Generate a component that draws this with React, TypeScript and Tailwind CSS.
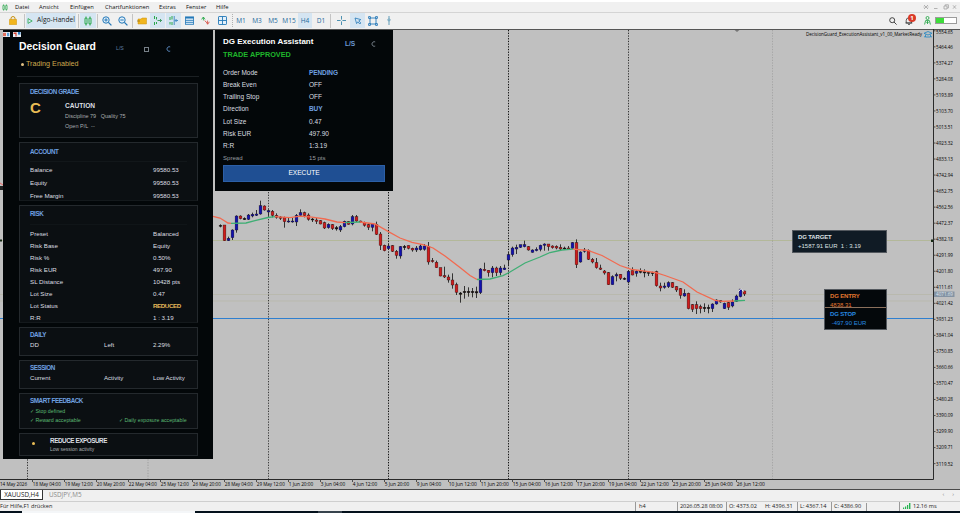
import type { ReactNode } from 'react';
import { clsx } from 'clsx';

// x, body top, body bottom, wick top, wick bottom, colour
type Candle = [number, number, number, number, number, 'r' | 'b' | 'k'];

// every group is stored at 3x with its own origin
const GROUPS: { ox: number; oy: number; data: Candle[] }[] = [
  {
    ox: 210,
    oy: 190,
    data: [
      [30, 106, 109, 103, 112, 'k'], [42, 105, 152, 105, 153, 'r'], [55, 145, 152, 140, 153, 'b'], [67, 120, 143, 118, 150, 'b'],
      [79, 78, 120, 76, 128, 'b'], [91, 78, 86, 76, 88, 'r'], [103, 85, 89, 82, 90, 'k'], [115, 75, 88, 72, 90, 'b'],
      [127, 73, 78, 68, 82, 'b'], [139, 72, 76, 60, 78, 'b'], [151, 47, 72, 32, 74, 'b'], [163, 48, 60, 46, 62, 'r'],
      [175, 62, 66, 58, 80, 'b'], [187, 64, 76, 60, 82, 'r'], [199, 76, 82, 70, 86, 'r'], [211, 81, 85, 78, 90, 'r'],
      [223, 82, 95, 80, 113, 'r'], [235, 93, 96, 84, 98, 'b'], [247, 93, 96, 84, 98, 'b'], [259, 76, 96, 72, 108, 'b'],
      [271, 68, 76, 58, 78, 'b'], [283, 68, 77, 65, 82, 'r'], [295, 75, 88, 70, 92, 'r'], [307, 87, 90, 84, 96, 'k'],
      [319, 90, 94, 84, 102, 'r'], [331, 92, 102, 90, 103, 'r'], [343, 98, 114, 95, 117, 'r'], [355, 103, 113, 100, 116, 'b'],
      [367, 104, 116, 102, 120, 'r'], [379, 113, 117, 108, 122, 'k'], [391, 110, 120, 105, 126, 'b'], [403, 94, 110, 92, 112, 'b'],
      [415, 95, 103, 93, 104, 'r'], [427, 80, 102, 75, 106, 'b'], [439, 80, 93, 75, 96, 'r'], [451, 93, 96, 92, 98, 'r'],
      [463, 98, 106, 95, 110, 'r'], [475, 104, 112, 100, 120, 'r'], [487, 102, 112, 100, 124, 'b'], [499, 103, 133, 95, 135, 'r'],
      [511, 132, 166, 126, 180, 'r'], [523, 166, 182, 164, 184, 'r'], [535, 168, 176, 162, 180, 'b'], [547, 167, 184, 165, 186, 'r'],
      [559, 184, 196, 180, 206, 'r'], [571, 170, 198, 168, 206, 'b'], [583, 169, 173, 165, 180, 'k'], [595, 167, 175, 166, 178, 'r'],
      [607, 175, 180, 173, 185, 'r'], [619, 174, 180, 168, 186, 'b'], [631, 174, 178, 164, 182, 'k'],
    ],
  },
  {
    ox: 420,
    oy: 220,
    data: [
      [1, 78, 88, 74, 90, 'b'], [13, 78, 88, 72, 92, 'b'], [25, 80, 126, 66, 134, 'r'], [37, 122, 125, 114, 128, 'r'],
      [49, 127, 143, 122, 144, 'r'], [61, 143, 168, 143, 169, 'r'], [73, 167, 171, 140, 174, 'r'], [85, 171, 180, 164, 188, 'r'],
      [97, 180, 195, 160, 206, 'r'], [109, 194, 217, 188, 225, 'r'], [121, 219, 223, 216, 248, 'k'], [133, 214, 218, 198, 236, 'k'],
      [145, 214, 218, 202, 230, 'k'], [157, 214, 218, 204, 232, 'k'], [169, 215, 219, 200, 234, 'k'], [181, 147, 218, 144, 222, 'b'],
      [193, 148, 152, 128, 154, 'r'], [205, 151, 158, 150, 170, 'r'], [217, 144, 158, 138, 172, 'b'], [229, 144, 158, 140, 168, 'r'],
      [241, 144, 158, 138, 166, 'b'], [253, 144, 149, 134, 150, 'b'], [265, 104, 120, 96, 138, 'b'], [277, 84, 104, 80, 110, 'b'],
      [289, 82, 87, 74, 102, 'b'], [301, 74, 82, 74, 84, 'b'], [313, 74, 80, 62, 82, 'b'], [325, 80, 90, 78, 92, 'r'],
      [337, 90, 97, 88, 98, 'b'], [349, 88, 92, 82, 94, 'b'], [361, 76, 88, 74, 94, 'b'], [373, 72, 76, 70, 92, 'b'],
      [385, 72, 80, 72, 92, 'r'], [397, 78, 83, 76, 86, 'r'], [409, 79, 84, 76, 88, 'r'], [421, 82, 87, 73, 90, 'r'],
      [433, 84, 87, 80, 90, 'k'], [445, 84, 87, 78, 90, 'r'], [457, 68, 85, 66, 86, 'b'], [469, 68, 134, 58, 144, 'r'],
      [481, 96, 126, 94, 128, 'b'], [493, 90, 94, 84, 98, 'b'], [505, 92, 118, 88, 120, 'r'], [517, 118, 126, 114, 130, 'r'],
      [529, 128, 143, 114, 146, 'r'], [541, 144, 148, 134, 150, 'r'], [553, 153, 159, 150, 164, 'r'], [565, 158, 194, 156, 195, 'r'],
      [577, 170, 194, 166, 194, 'b'], [589, 164, 168, 158, 184, 'b'], [601, 163, 175, 162, 180, 'r'], [613, 175, 178, 172, 180, 'k'],
      [625, 154, 186, 150, 190, 'b'], [637, 152, 165, 142, 166, 'r'], [649, 154, 160, 150, 170, 'b'],
    ],
  },
  {
    ox: 640,
    oy: 220,
    data: [
      [1, 153, 157, 145, 160, 'k'], [13, 155, 159, 148, 172, 'k'], [25, 157, 160, 154, 168, 'k'], [37, 158, 161, 155, 168, 'k'],
      [49, 155, 197, 152, 200, 'r'], [61, 198, 204, 188, 214, 'r'], [73, 198, 202, 188, 206, 'b'], [85, 188, 200, 184, 204, 'b'],
      [97, 188, 202, 186, 204, 'r'], [109, 200, 210, 198, 216, 'r'], [121, 206, 226, 204, 236, 'r'], [133, 220, 228, 208, 230, 'b'],
      [145, 220, 266, 218, 268, 'r'], [157, 254, 268, 252, 276, 'r'], [169, 254, 266, 244, 282, 'r'], [181, 260, 266, 254, 280, 'r'],
      [193, 262, 266, 250, 276, 'k'], [205, 262, 266, 254, 280, 'k'], [217, 252, 266, 250, 276, 'b'], [229, 240, 252, 238, 254, 'b'],
      [241, 242, 246, 240, 248, 'k'], [253, 250, 266, 248, 267, 'b'], [265, 248, 262, 246, 270, 'r'], [277, 246, 258, 238, 262, 'b'],
      [289, 228, 244, 224, 246, 'b'], [301, 207, 230, 206, 232, 'b'], [313, 213, 222, 212, 228, 'r'],
    ],
  },
];

const BODY = { r: '#cf1c1c', b: '#1212b0', k: '#111' };

const MA = [
  { c: '#f26a50', d: 'M213 216.3 220 218 228 223 231 223.4' },
  { c: '#3fae74', d: 'M231 223.4 246 223 256 220.4 268 217.5 275 216.6' },
  { c: '#f26a50', d: 'M275 216.6 290 217.6 300 216.2 312 217.2 325 219 337 222 345 222.7' },
  { c: '#3fae74', d: 'M345 222.7 360 222' },
  { c: '#f26a50', d: 'M360 222 375 224 388 231.4 400 238 412 242.4 423 244.6 433 248 445 256 460 267.5 470 275.5 477 279.5' },
  { c: '#3fae74', d: 'M477 279.5 490 279 503 275.6 510 272 525 263 540 257 550 252.5 562 250 573 249.2' },
  { c: '#f26a50', d: 'M573 249.2 588 250.5 602 255.5 620 265.5 632 269.5 645 271.2 655 272.5 665 275.5 683 282 697 292 715 300.3 722 301.3 734 301' },
  { c: '#3fae74', d: 'M734 301 745 300.3' },
];

const TIMES = [
  '14 May 2026', '18 May 04:00', '19 May 12:00', '20 May 20:00', '22 May 04:00', '25 May 12:00', '26 May 20:00', '28 May 04:00',
  '29 May 12:00', '1 Jun 20:00', '3 Jun 04:00', '4 Jun 12:00', '5 Jun 20:00', '9 Jun 04:00', '10 Jun 12:00', '11 Jun 20:00',
  '15 Jun 04:00', '16 Jun 12:00', '17 Jun 20:00', '19 Jun 04:00', '22 Jun 12:00', '23 Jun 20:00', '25 Jun 04:00', '26 Jun 12:00',
];

const PRICES = Array.from({ length: 28 }, (_, i) => (5554.65 - i * 90.19).toFixed(2));

const GRID = [
  { x: 27.5, o: 0.8 },
  { x: 148, o: 0.18 },
  { x: 268.5, o: 0.75 },
  { x: 388.5, o: 1 },
  { x: 508.5, o: 1 },
  { x: 628.5, o: 0.8 },
  { x: 772.5, o: 0.15 },
];

function Chart() {
  return (
    <svg className="block h-[460px] w-[960px]" viewBox="0 29 960 460" fontFamily="'Open Sans', sans-serif">
      <rect x="0" y="29" width="960" height="460" fill="#c0c0c0" />
      <path d="M0 240.5H933" stroke="#b3b89a" />
      <path d="M0 294.5H933M0 301H933" stroke="#b9b9ae" />
      {GRID.map((g) => (
        <path key={g.x} d={`M${g.x} 30V479`} stroke="#111" strokeOpacity={g.o} strokeDasharray="1.3 1.4" />
      ))}
      {GROUPS.map((g) =>
        g.data.map(([x, t, b, h, l, c]) => {
          const cx = Math.round(g.ox + x / 3) + 0.5;
          return (
            <g key={`${g.ox}-${x}`}>
              <path d={`M${cx} ${g.oy + h / 3}V${g.oy + l / 3}`} stroke="#222" strokeWidth=".9" />
              <rect
                x={cx - 1.4}
                y={g.oy + t / 3}
                width="2.8"
                height={Math.max(1, (b - t) / 3)}
                fill={BODY[c]}
                stroke="#1a1010"
                strokeWidth=".35"
              />
            </g>
          );
        }),
      )}
      {MA.map((m) => (
        <path key={m.d} d={m.d} fill="none" stroke={m.c} strokeWidth="1.3" />
      ))}
      <path d="M738.5 291.5 741 288.5 743.5 291.5" fill="none" stroke="#fff" />
      <path d="M0 318.5H933" stroke="#2f7fcf" strokeWidth="1.1" />
      <path d="M734 29.5H740L737 32Z" fill="#777" />
      <rect x="0" y="186" width="3" height="4" fill="#222" />
      <path d="M0 183 3 185" stroke="#e66" />
      <rect x="0" y="239.5" width="2" height="2" fill="#142914" />
      <rect x="931" y="239.5" width="2.5" height="2.5" fill="#142914" />

      {/* frame and axes */}
      <path d="M0 29.5H960" stroke="#555" strokeWidth="1.2" />
      <path d="M933.5 29V479.5M0 479.5H933.5" stroke="#2a2a2a" fill="none" />
      {PRICES.map((p, i) => {
        const y = 30.8 + i * 16.03;
        return (
          <g key={p}>
            <path d={`M933 ${y}H935.5`} stroke="#333" strokeWidth=".8" />
            <text
              x="936"
              y={i === 0 ? 34.4 : y + 1.9}
              fontSize="5.2"
              fill="#000"
              textLength="17"
              lengthAdjust="spacingAndGlyphs"
            >
              {p}
            </text>
          </g>
        );
      })}
      <rect x="934" y="291.5" width="20.5" height="5.5" fill="#8493a3" />
      <text x="936" y="296.2" fontSize="5.3" fill="#dfe6ee" textLength="17" lengthAdjust="spacingAndGlyphs">
        4071.69
      </text>
      {TIMES.map((t, i) => (
        <g key={t}>
          {i > 0 && <path d={`M${i * 32 + 0.5} 479V482`} stroke="#333" strokeWidth=".8" />}
          <text
            x={i * 32 + (i ? 0.8 : 0)}
            y="485.7"
            fontSize="5.2"
            fill="#000"
            textLength={i === 0 ? 27 : t.length > 11 ? 28 : 24.5}
            lengthAdjust="spacingAndGlyphs"
          >
            {t}
          </text>
        </g>
      ))}
      <text x="806" y="36" fontSize="5.6" fill="#000" textLength="116" lengthAdjust="spacingAndGlyphs">
        DecisionGuard_ExecutionAssistant_v1_00_MarketReady
      </text>
      <g stroke="#2d8bc4" strokeWidth=".9" fill="none">
        <path d="M924 33.3 928 31.5 932 33.3 928 35ZM925.5 34.5V37H930.5V34.5M924 36.8H925.5M931 36.8H932" />
      </g>
    </svg>
  );
}

interface LineProps {
  className?: string;
  children: ReactNode;
}

function Line({ className, children }: LineProps) {
  return <div className={clsx('flex shrink-0 items-center whitespace-pre', className)}>{children}</div>;
}

function Moon({ className }: { className?: string }) {
  return (
    <svg className={clsx('h-[6px] w-[5px] shrink-0', className)} viewBox="0 0 5 6">
      <path d="M4.2 .9A2.3 2.3 0 1 0 4.2 5.1" fill="none" stroke="currentColor" strokeWidth=".9" />
    </svg>
  );
}

function Card({ className, children }: LineProps) {
  return (
    <section className={clsx('flex shrink-0 flex-col overflow-hidden border border-[#24292d] bg-[#0b0f12] pl-[10px]', className)}>
      {children}
    </section>
  );
}

function Heading({ children }: LineProps) {
  return <Line className="h-2 text-[6.3px] font-bold tracking-[-0.44px] text-[#6fa0e0]">{children}</Line>;
}

function Field({ label, value, className, strong }: { label: string; value: string; className?: string; strong?: boolean }) {
  return (
    <Line className={clsx('text-[6.2px]', className)}>
      <span className="w-[123px]">{label}</span>
      <span className={strong ? 'font-bold tracking-[-0.4px] text-[#e6b85a]' : ''}>{value}</span>
    </Line>
  );
}

const RISK = [
  ['Preset', 'Balanced'],
  ['Risk Base', 'Equity'],
  ['Risk %', '0.50%'],
  ['Risk EUR', '497.90'],
  ['SL Distance', '10428 pts'],
  ['Lot Size', '0.47'],
  ['Lot Status', 'REDUCED'],
  ['R:R', '1 : 3.19'],
];

function Triple({ a, b, c }: { a: string; b: string; c: string }) {
  return (
    <Line className="mt-[2px] h-2 text-[6.1px]">
      <span className="w-[74px]">{a}</span>
      <span className="w-[49px]">{b}</span>
      <span>{c}</span>
    </Line>
  );
}

function DecisionGuard() {
  return (
    <aside className="absolute top-px left-[3px] flex h-[429px] w-[210px] flex-col bg-[#030709] px-4 text-[#dcdfe1]">
      <div className="absolute top-[2px] left-0 flex gap-[3px]">
        <svg className="h-[5px] w-[7px]" viewBox="0 0 7 5">
          <path d="M0 0H7V5H0Z" fill="#e8eef5" />
          <path d="M0 .8H3V4.2H0Z" fill="#e0705f" />
          <path d="M4 .8H6.2V4.2H4Z" fill="#5c9fd8" />
        </svg>
        <svg className="h-[5px] w-[8px]" viewBox="0 0 8 5">
          <path d="M0 0H8V5H0Z" fill="#e8eef5" />
          <path d="M.6 .6H3.6V4.4H2.4V2H.6Z" fill="#d8432f" />
          <path d="M5 0H7.4V2.6H5Z" fill="#2d7dc4" />
        </svg>
      </div>
      <Line className="mt-[10px] h-[13px] text-white">
        <span className="w-[97px] text-[10.4px] font-bold">Decision Guard</span>
        <span className="mt-[4px] w-[28px] text-[5.2px] text-[#5d7ea3]">L/S</span>
        <span className="mt-[5px] mr-[17px] size-[5px] border border-[#778088]" />
        <Moon className="mt-[4px] text-[#5f8fc8]" />
      </Line>
      <Line className="mt-[6px] h-[10px] gap-[2px] text-[7.2px] text-[#cfa94e]">
        <span className="ml-[2px] size-[3px] rounded-full bg-[#e0c184]" />
        <span>Trading Enabled</span>
      </Line>
      <div className="mt-[7px] mr-[-2px] ml-[-2px] h-px shrink-0 bg-[#1b2023]" />

      <div className="mt-[6px] mr-[-1px] flex flex-col">
        <Card className="h-[55px] pt-[4px]">
          <Heading>DECISION GRADE</Heading>
          <div className="flex">
            <div className="w-[35px] pt-[4px] text-[15px] leading-[16px] font-bold text-[#e9bc55]">C</div>
            <div className="pt-[5px]">
              <Line className="h-[9px] text-[6.6px] font-bold">CAUTION</Line>
              <Line className="mt-[2px] h-[9px] text-[5.5px] text-[#a9aeb1]">{'Discipline 79   Quality 75'}</Line>
              <Line className="mt-px h-[9px] text-[5.5px] text-[#a9aeb1]">Open P/L  --</Line>
            </div>
          </div>
        </Card>
        <Card className="mt-[4px] h-[59px] border-b-[#14191c] pt-[5px]">
          <Heading>ACCOUNT</Heading>
          <div className="mt-[5px] mr-[10px] mb-px h-px shrink-0 bg-[#12171a]" />
          <Field className="h-[13px]" label="Balance" value="99580.53" />
          <Field className="h-[13px]" label="Equity" value="99580.53" />
          <Field className="h-[13px]" label="Free Margin" value="99580.53" />
        </Card>
        <Card className="mt-[4px] h-[118px] border-b-[#14191c] pt-[4px]">
          <Heading>RISK</Heading>
          <div className="mt-[6px] mr-[10px] mb-[3px] h-px shrink-0 bg-[#101518]" />
          {RISK.map(([label, value]) => (
            <Field key={label} className="h-3" label={label} value={value} strong={value === 'REDUCED'} />
          ))}
        </Card>
        <Card className="mt-[4px] h-[29px] pt-[3px]">
          <Heading>DAILY</Heading>
          <Triple a="DD" b="Left" c="2.29%" />
        </Card>
        <Card className="mt-[4px] h-[29px] pt-[3px]">
          <Heading>SESSION</Heading>
          <Triple a="Current" b="Activity" c="Low Activity" />
        </Card>
        <Card className="mt-[4px] h-[36px] pt-[3px]">
          <Heading>SMART FEEDBACK</Heading>
          <Line className="mt-[2px] h-[9px] text-[5.3px] text-[#5cba74]">✓ Stop defined</Line>
          <Line className="h-[9px] text-[5.3px] text-[#5cba74]">
            <span className="w-[89px]">✓ Reward acceptable</span>
            <span>✓ Daily exposure acceptable</span>
          </Line>
        </Card>
        <Card className="mt-[4px] h-[23px] pt-[2px]">
          <div className="flex items-start">
            <span className="mt-[6px] ml-[2px] size-[3px] rounded-full bg-[#e9bc55]" />
            <div className="ml-[15px]">
              <Line className="h-[9px] text-[6.3px] font-bold tracking-[-0.42px]">REDUCE EXPOSURE</Line>
              <Line className="h-[9px] text-[5px] text-[#a9aeb1]">Low session activity</Line>
            </div>
          </div>
        </Card>
      </div>
    </aside>
  );
}

const ORDER = [
  ['Order Mode', 'PENDING'],
  ['Break Even', 'OFF'],
  ['Trailing Stop', 'OFF'],
  ['Direction', 'BUY'],
  ['Lot Size', '0.47'],
  ['Risk EUR', '497.90'],
  ['R:R', '1:3.19'],
];

function ExecutionAssistant() {
  return (
    <aside className="absolute top-px left-[215px] flex h-[161px] w-[178px] flex-col bg-[#030709] px-2 text-[6.5px] text-[#dcdfe1]">
      <Line className="mt-[7px] h-[10px]">
        <span className="w-[122px] text-[8px] font-bold text-white">DG Execution Assistant</span>
        <span className="mt-[3px] w-[26px] text-[6.6px] font-bold text-[#6b98d4]">L/S</span>
        <Moon className="mt-[3px] text-[#7d8790]" />
      </Line>
      <Line className="mt-[3px] h-[10px] text-[7.3px] font-bold text-[#1fb52b]">TRADE APPROVED</Line>
      <div className="mt-[7px]">
        {ORDER.map(([label, value]) => (
          <Line key={label} className="h-[12.1px]">
            <span className="w-[86px]">{label}</span>
            <span className={clsx((value === 'PENDING' || value === 'BUY') && 'font-bold tracking-[-0.1px] text-[#6fa0e0]')}>
              {value}
            </span>
          </Line>
        ))}
        <Line className="h-[11px] text-[6.1px] text-[#979ca0]">
          <span className="w-[86px]">Spread</span>
          <span>15 pts</span>
        </Line>
      </div>
      <button className="mt-[2px] h-[17px] w-[162px] shrink-0 border border-[#2c5fa6] bg-[#1f4f93] text-[6.6px] leading-none text-white">
        EXECUTE
      </button>
    </aside>
  );
}

function Tags() {
  return (
    <>
      <div className="absolute top-[201px] left-[792px] h-[23px] w-[95px] border border-[#53585e] bg-[#101b25] pt-[2px] pl-[5px] text-[6px] text-[#dde1e4]">
        <Line className="h-[9px] font-bold tracking-[-0.15px]">DG TARGET</Line>
        <Line className="h-[9px]">{'+1587.91 EUR  1 : 3.19'}</Line>
      </div>
      <div className="absolute top-[260px] left-[824px] h-[41px] w-[63px] border border-[#53585e] bg-[#04080b] text-[6px]">
        <div className="h-[18px] overflow-hidden border-b border-[#8b705c] pt-[2px] pl-[5px] text-[#e2762f]">
          <Line className="h-[9px] font-bold tracking-[-0.15px]">DG ENTRY</Line>
          <Line className="h-[9px]">4838.31</Line>
        </div>
        <div className="pt-[2px] pl-[5px] text-[#2788e0]">
          <Line className="h-[9px] font-bold tracking-[-0.15px]">DG STOP</Line>
          <Line className="h-[9px]"> -497.90 EUR</Line>
        </div>
      </div>
    </>
  );
}

function Slot({ className, active, children }: { className?: string; active?: boolean; children: ReactNode }) {
  return (
    <div className={clsx('flex h-[15px] shrink-0 items-center justify-center', active && 'bg-[#d5e5f2]', className)}>
      {children}
    </div>
  );
}

function Sep({ className }: { className?: string }) {
  return <div className={clsx('h-[14px] w-px shrink-0 bg-[#c4c4c4]', className)} />;
}

function Zoom({ plus }: { plus?: boolean }) {
  return (
    <svg className="size-[10px]" viewBox="0 0 10 10" fill="none" stroke="#2478b8" strokeWidth="1">
      <circle cx="4" cy="4" r="3.2" fill="#e3f0fa" />
      <path d="M6.4 6.4 9.4 9.4" strokeWidth="1.3" />
      <path d={plus ? 'M2.3 4H5.7M4 2.3V5.7' : 'M2.3 4H5.7'} />
    </svg>
  );
}

function Candles({ className }: { className?: string }) {
  return (
    <svg className={className} viewBox="0 0 8 10" fill="none" stroke="#2aa84c" strokeWidth="1">
      <path d="M1 2.2H3V7.8H1ZM2 .5V2M2 8V9.5M5 2.2H7V7.8H5ZM6 .5V2M6 8V9.5" />
    </svg>
  );
}

function Toolbar() {
  return (
    <div className="flex h-[16px] shrink-0 items-center border-t border-[#d4d4d4] bg-[#f0f0f0] text-[6.5px] font-medium text-[#1f6a9c]">
      <Slot className="ml-[3px] w-[20px]">
        <svg className="h-[9px] w-[8px]" viewBox="0 0 8 9">
          <path d="M2 4V2.5A2 2 0 0 1 6 2.5V4" fill="none" stroke="#c59015" />
          <rect x=".3" y="3.3" width="7.4" height="5.5" rx=".5" fill="#f2b51d" stroke="#c99314" strokeWidth=".5" />
        </svg>
      </Slot>
      <Sep className="ml-px" />
      <Slot active className="ml-px w-[50px] gap-[4px] text-[6.7px] whitespace-nowrap text-[#222]">
        <svg className="size-[6px] shrink-0" viewBox="0 0 6 6">
          <path d="M1 .6 5.2 3 1 5.4Z" fill="none" stroke="#2aa84c" strokeWidth=".8" />
        </svg>
        Algo-Handel
      </Slot>
      <Sep className="ml-[2px]" />
      <Slot active className="ml-px w-[16px]">
        <Candles className="h-[10px] w-[8px]" />
      </Slot>
      <Sep className="ml-px" />
      <Slot className="w-[17px]"><Zoom plus /></Slot>
      <Slot className="w-[16px]"><Zoom /></Slot>
      <Sep className="ml-px" />
      <Slot className="ml-px w-[16px]">
        <svg className="h-[8px] w-[10px]" viewBox="0 0 10 8">
          <path d="M1 2H4L5 1H9.5V7H1Z" fill="#f2b51d" stroke="#c99314" strokeWidth=".5" />
          <path d="M0 4H3" stroke="#8a6a12" strokeWidth=".7" />
        </svg>
      </Slot>
      <Slot active className="w-[15px]">
        <svg className="size-[9px]" viewBox="0 0 9 9" fill="none" stroke="#2aa84c">
          <path d="M1.5 0V3M1.5 6V9M3.5 1V3.5M3.5 6V8" />
          <path d="M4.5 4.5H8.5M7 3 8.5 4.5 7 6" stroke="#1f8a3f" strokeWidth=".8" />
        </svg>
      </Slot>
      <Slot active className="ml-px w-[15px]">
        <svg className="size-[9px]" viewBox="0 0 9 9" fill="none" stroke="#2aa84c">
          <path d="M1 1V4M1 6V8.5M3 0V3.5M3 6V9" />
          <path d="M5.2 0V9" stroke="#2478b8" strokeWidth=".8" />
          <path d="M9 4.5H6.3M7.5 3 6.2 4.5 7.5 6" stroke="#2478b8" strokeWidth=".8" />
        </svg>
      </Slot>
      <Slot className="w-[17px]">
        <svg className="size-[9px]" viewBox="0 0 9 9" fill="none" stroke="#2478b8" strokeWidth=".8">
          <rect x=".4" y=".9" width="8.2" height="7.4" fill="#d8eaf8" />
          <path d="M.4 1.7H8.6" strokeWidth="1.6" />
          <path d="M.4 4.4H8.6M.4 6.4H8.6" />
        </svg>
      </Slot>
      <Slot className="w-[15px]">
        <svg className="size-[9px]" viewBox="0 0 9 9" fill="none">
          <path d="M.6 3.4 2.4 1 4 3.4M2.4 1V4.4" stroke="#2aa84c" strokeWidth=".9" />
          <path d="M3.6 4.6 5 5.8M5 5.6 6.6 8.2 8.4 5.8M6.6 8.2V4.6" stroke="#d6564b" strokeWidth=".9" />
        </svg>
      </Slot>
      <Slot className="w-[18px]">
        <svg className="size-[9px]" viewBox="0 0 9 9" fill="#e3f0fa" stroke="#2478b8" strokeWidth=".9">
          <rect x=".5" y=".5" width="8" height="8" rx=".6" />
          <path d="M4.5.5V8.5M.5 4.5H8.5" />
        </svg>
      </Slot>
      <div className="ml-px h-[13px] shrink-0 border-l border-dotted border-[#b0b0b0]" />
      <Slot className="w-[16px]">M1</Slot>
      <Slot className="w-[16px]">M3</Slot>
      <Slot className="w-[16px]">M5</Slot>
      <Slot className="w-[16px]">M15</Slot>
      <Slot active className="mx-px w-[14px]">H4</Slot>
      <Slot className="w-[16px]">D1</Slot>
      <Sep className="ml-px" />
      <Slot className="ml-[2px] w-[16px]">
        <svg className="size-[9px]" viewBox="0 0 9 9" stroke="#2478a0" strokeWidth=".8">
          <path d="M4.5 0V3.6M4.5 5.4V9M0 4.5H3.6M5.4 4.5H9" />
        </svg>
      </Slot>
      <Slot active className="ml-px w-[15px]">
        <svg className="size-[8px]" viewBox="0 0 8 8" fill="none" stroke="#2478b8" strokeWidth=".8">
          <path d="M1 1 6.8 2.6 4.8 3.8 6.8 6 5.8 7 3.8 4.8 2.6 6.6Z" />
        </svg>
      </Slot>
      <Slot className="w-[16px]">
        <svg className="size-[10px]" viewBox="0 0 10 10" fill="none" stroke="#2478b8" strokeWidth=".9">
          <path d="M2 2H8V8H2Z" />
          <path d="M.6.6H2.4V2.4H.6ZM7.6.6H9.4V2.4H7.6ZM.6 7.6H2.4V9.4H.6ZM7.6 7.6H9.4V9.4H7.6Z" />
        </svg>
      </Slot>
      <Slot className="w-[15px]">
        <svg className="h-[9px] w-[4px]" viewBox="0 0 4 9" stroke="#2478a0" strokeWidth=".7" fill="none">
          <path d="M2 0V2.6M2 5.2V9" />
          <circle cx="2" cy="3.9" r="1.1" />
        </svg>
      </Slot>

      <Slot className="ml-auto w-[16px]">
        <svg className="size-[8px]" viewBox="0 0 8 8" fill="none" stroke="#333" strokeWidth=".9">
          <circle cx="3.2" cy="3.2" r="2.5" />
          <path d="M5 5 7.6 7.6" />
        </svg>
      </Slot>
      <Slot className="relative w-[16px]">
        <svg className="size-[8px]" viewBox="0 0 8 8" fill="none" stroke="#333" strokeWidth=".8">
          <path d="M1.2 6V3.5A2.7 2.7 0 0 1 6.6 3.5V6ZM.5 6H7.3M3 7.4H5" />
        </svg>
        <span className="absolute top-[1px] left-[7px] flex size-[8px] items-center justify-center rounded-full bg-[#d93a28] text-[6px] leading-none font-bold text-white">
          1
        </span>
      </Slot>
      <Slot className="ml-[2px] w-[16px]">
        <svg className="h-[9px] w-[7px]" viewBox="0 0 7 9" fill="none" stroke="#2aa84c" strokeWidth=".9">
          <circle cx="3.5" cy="2" r="1.5" />
          <path d="M.6 8.5 1.6 4.6H5.4L6.4 8.5M2.4 6.5H4.6M3.5 5V8" />
        </svg>
      </Slot>
      <div className="mr-[3px] h-[7px] w-[22px] shrink-0 border border-[#9b9b9b] bg-white">
        <div className="h-full w-[8px] bg-[#3ddc3a]" />
      </div>
    </div>
  );
}

const MENU = [
  { label: 'Datei', w: 'w-[24px]' },
  { label: 'Ansicht', w: 'w-[31px]' },
  { label: 'Einfügen', w: 'w-[35px]' },
  { label: 'Chartfunktionen', w: 'w-[54px]' },
  { label: 'Extras', w: 'w-[27px]' },
  { label: 'Fenster', w: 'w-[30px]' },
  { label: 'Hilfe', w: 'w-[20px]' },
];

function MenuBar() {
  return (
    <div className="flex h-[12px] shrink-0 items-center border-t-2 border-white bg-[#f0f0f0] text-[5.8px] text-[#111]">
      <Candles className="mr-[7px] ml-[2px] h-[7px] w-[6px]" />
      {MENU.map((m) => (
        <span key={m.label} className={clsx('shrink-0 whitespace-nowrap', m.w)}>
          {m.label}
        </span>
      ))}
      <svg className="mr-[3px] ml-auto h-[6px] w-[34px]" viewBox="0 0 34 6" fill="none" stroke="#a2a2a2" strokeWidth=".8">
        <path d="M1 1 5 5M5 1 1 5M.5 3H1.5M4.5 3H5.5M11 4.5H14.5M21 2H24V5H21ZM22.2 2V.8H25.4V4H24M30 1.3 33 4.7M33 1.3 30 4.7" />
      </svg>
    </div>
  );
}

function StatusBar() {
  return (
    <footer className="flex h-[10px] shrink-0 items-center border-t border-[#cfcfcf] bg-[#f0f0f0] text-[5.6px] whitespace-nowrap text-[#222]">
      <span className="w-[635px]">Für Hilfe,F1 drücken</span>
      <span className="w-[42px] border-l border-[#999] pl-[3px]">h4</span>
      <span className="w-[49px] border-l border-[#999] pl-[2px] tracking-[-0.1px]">2026.05.28 08:00</span>
      <span className="w-[36px] border-l border-[#999] pl-[2px]">O: 4373.02</span>
      <span className="w-[35px] pl-[3px]">H: 4396.31</span>
      <span className="w-[34px] border-l border-[#999] pl-[2px]">L: 4367.14</span>
      <span className="w-[35px] border-l border-[#999] pl-[2px]">C: 4386.90</span>
      <span className="h-[8px] w-[33px] border-l border-[#999]" />
      <span className="flex items-center gap-[2px] border-l border-[#999] pl-[3px]">
        <svg className="h-[6px] w-[8px]" viewBox="0 0 8 6" fill="#27b352">
          <path d="M0 4.5H1.2V6H0ZM2 3.5H3.2V6H2ZM4 2H5.2V6H4ZM6 0H7.4V6H6Z" />
        </svg>
        12.16 ms
      </span>
    </footer>
  );
}

export default function App() {
  return (
    <div className="flex h-[513px] w-[960px] flex-col overflow-hidden bg-[#f0f0f0] font-['Open_Sans',sans-serif]">
      <MenuBar />
      <Toolbar />
      <main className="relative mt-px h-[460px] shrink-0 font-['Liberation_Sans',Arial,sans-serif]">
        <Chart />
        <DecisionGuard />
        <ExecutionAssistant />
        <Tags />
      </main>
      <div className="flex h-[12px] shrink-0 items-start border-t border-[#4a4a4a] text-[6.3px] leading-[9px] text-[#222]">
        <div className="h-[10px] w-[43px] border border-t-0 border-[#333] bg-white text-center">XAUUSD,H4</div>
        <div className="ml-[6px] text-[#8a8a8a]">USDJPY,M5</div>
        <div className="mr-[6px] ml-auto flex gap-[8px] text-[6px] text-[#888]">
          <span>‹</span>
          <span>›</span>
        </div>
      </div>
      <StatusBar />
      <div className="flex h-[2px] shrink-0 bg-[#04111c]">
        <div className="ml-[22px] w-[173px] bg-[#f4f6f8]" />
        <div className="ml-[123px] w-[24px] bg-[#37434d]" />
      </div>
    </div>
  );
}
